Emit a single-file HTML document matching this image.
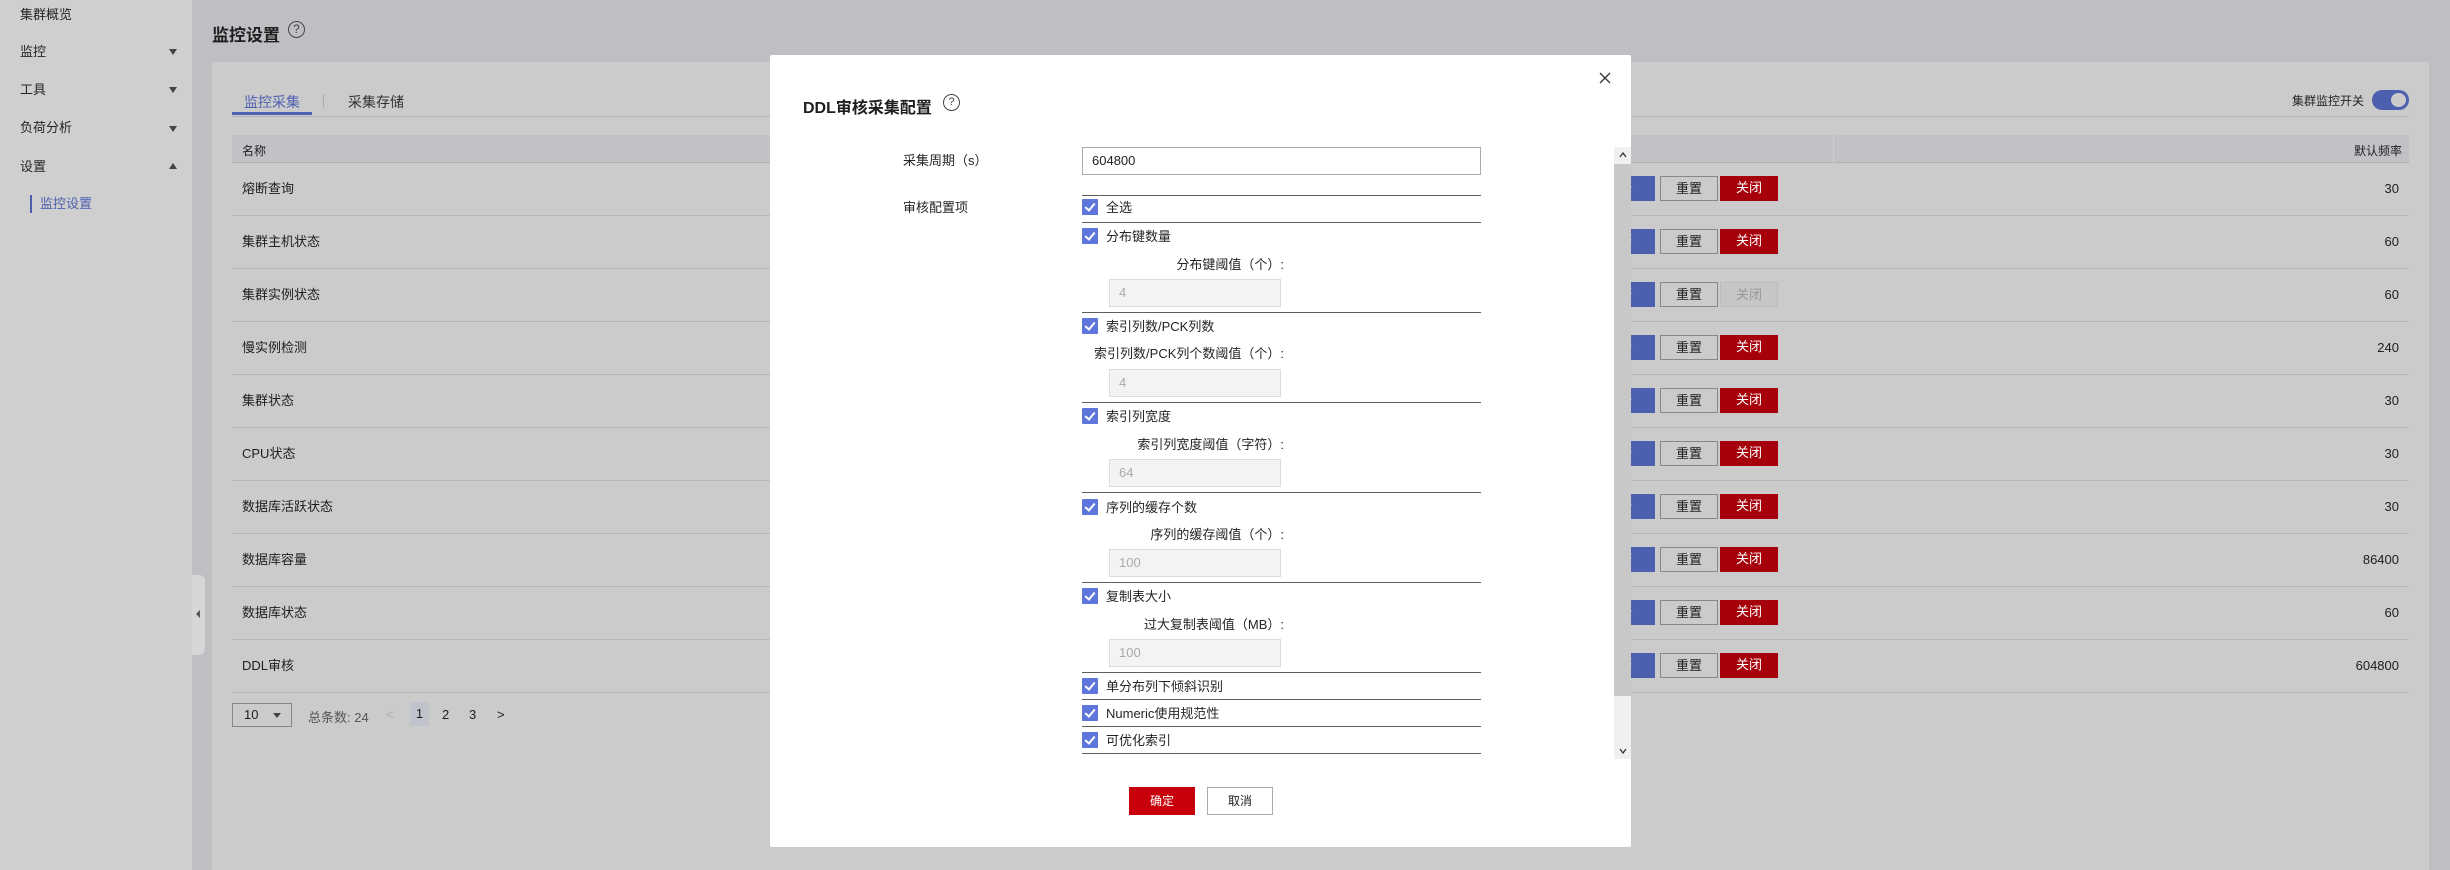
<!DOCTYPE html>
<html><head><meta charset="utf-8">
<style>
*{box-sizing:border-box;margin:0;padding:0}
body{width:2450px;height:870px;overflow:hidden;background:#bebfc3;font-family:"Liberation Sans","Noto Sans CJK SC",sans-serif;font-size:13px;color:#1e1e1e;position:relative}
.abs{position:absolute}
.side{left:0;top:0;width:192px;height:870px;background:#cfcfcf}
.si{position:absolute;left:20px;font-size:13px;color:#252525;line-height:16px}
.arr{position:absolute;left:169px;width:0;height:0;border-left:4px solid transparent;border-right:4px solid transparent}
.card{left:212px;top:62px;width:2217px;height:808px;background:#cbcbcb}
.row{position:absolute;left:232px;width:2177px;height:53px;border-bottom:1px solid #b5b6ba}
.row .n{position:absolute;left:10px;top:18px;line-height:16px}
.row .f{position:absolute;right:10px;top:18px;line-height:16px}
.b{position:absolute;top:13px;height:25px;font-size:13px;line-height:23px;text-align:center}
.modal{left:770px;top:55px;width:861px;height:792px;background:#fff;border-radius:2px}
.ln{position:absolute;left:312px;width:399px;height:1px;background:#5e5e5e}
.cb{position:absolute;left:312px;width:16px;height:16px;background:#5e76dc;border-radius:1px}
.cb:after{content:"";position:absolute;left:5px;top:2px;width:4px;height:8px;border-right:2px solid #fff;border-bottom:2px solid #fff;transform:rotate(40deg)}
.ct{position:absolute;left:336px;line-height:16px;font-size:13px;color:#252525}
.sl{position:absolute;right:347px;line-height:16px;font-size:13px;color:#252525;text-align:right}
.di{position:absolute;left:339px;width:172px;height:28px;background:#f3f3f3;border:1px solid #dcdcdc;color:#aaa;padding-left:9px;line-height:26px;font-size:13px}
.bl{position:absolute;left:1626px;width:29px;height:25px;background:#4d60b0;color:#9aa5d8;font-size:13px;line-height:25px;overflow:hidden;text-indent:-6px}
</style></head><body>
<div class="abs side">
  <div class="si" style="top:7px">集群概览</div>
  <div class="si" style="top:44px">监控</div><div class="arr" style="top:49px;border-top:6px solid #444"></div>
  <div class="si" style="top:82px">工具</div><div class="arr" style="top:87px;border-top:6px solid #444"></div>
  <div class="si" style="top:120px">负荷分析</div><div class="arr" style="top:126px;border-top:6px solid #444"></div>
  <div class="si" style="top:159px">设置</div><div class="arr" style="top:163px;border-bottom:6px solid #444"></div>
  <div class="abs" style="left:30px;top:195px;width:2px;height:18px;background:#4d60b0"></div>
  <div class="si" style="left:40px;top:196px;color:#4d60b0">监控设置</div>
</div>
<div class="abs" style="left:192px;top:575px;width:13px;height:80px;background:#d6d6d6;border-radius:0 6px 6px 0"></div>
<div class="abs" style="left:196px;top:610px;width:0;height:0;border-top:4px solid transparent;border-bottom:4px solid transparent;border-right:4px solid #555"></div>
<div class="abs" style="left:212px;top:21px;font-size:17px;font-weight:bold;color:#1e1e1e">监控设置</div>
<div class="abs" style="left:288px;top:21px;width:17px;height:17px;border:1.5px solid #444;border-radius:50%;font-size:12px;text-align:center;line-height:15px;color:#444">?</div>
<div class="abs card"></div>
<div class="abs" style="left:244px;top:92px;font-size:14px;color:#4d60b0">监控采集</div>
<div class="abs" style="left:232px;top:112px;width:80px;height:3px;background:#4d60b0"></div>
<div class="abs" style="left:323px;top:94px;width:1px;height:14px;background:#aaa"></div>
<div class="abs" style="left:348px;top:92px;font-size:14px;color:#333">采集存储</div>
<div class="abs" style="left:232px;top:116px;width:2177px;height:1px;background:#b2b3b7"></div>
<div class="abs" style="left:2292px;top:92px;font-size:12px;color:#252525">集群监控开关</div>
<div class="abs" style="left:2372px;top:90px;width:37px;height:20px;border-radius:10px;background:#4d60b0"></div>
<div class="abs" style="left:2391px;top:93px;width:15px;height:14px;border-radius:50%;background:#cbcbcb"></div>
<div class="abs" style="left:232px;top:135px;width:2177px;height:28px;background:#c1c2c6;border-bottom:1px solid #b1b2b6"></div>
<div class="abs" style="left:1833px;top:135px;width:1px;height:28px;background:#cfcfd2"></div>
<div class="abs" style="left:242px;top:142px;font-size:12px">名称</div>
<div class="abs" style="right:48px;top:142px;font-size:12px">默认频率</div>

<div class="row" style="top:163px"><span class="n">熔断查询</span><span class="f">30</span><div class="b" style="left:1428px;width:58px;border:1px solid #888;">重置</div><div class="b" style="left:1488px;width:58px;background:#a6000b;color:#fff">关闭</div></div>
<div class="row" style="top:216px"><span class="n">集群主机状态</span><span class="f">60</span><div class="b" style="left:1428px;width:58px;border:1px solid #888;">重置</div><div class="b" style="left:1488px;width:58px;background:#a6000b;color:#fff">关闭</div></div>
<div class="row" style="top:269px"><span class="n">集群实例状态</span><span class="f">60</span><div class="b" style="left:1428px;width:58px;border:1px solid #888;">重置</div><div class="b" style="left:1488px;width:58px;background:#c6c6c6;border:1px solid #bbb;color:#999">关闭</div></div>
<div class="row" style="top:322px"><span class="n">慢实例检测</span><span class="f">240</span><div class="b" style="left:1428px;width:58px;border:1px solid #888;">重置</div><div class="b" style="left:1488px;width:58px;background:#a6000b;color:#fff">关闭</div></div>
<div class="row" style="top:375px"><span class="n">集群状态</span><span class="f">30</span><div class="b" style="left:1428px;width:58px;border:1px solid #888;">重置</div><div class="b" style="left:1488px;width:58px;background:#a6000b;color:#fff">关闭</div></div>
<div class="row" style="top:428px"><span class="n">CPU状态</span><span class="f">30</span><div class="b" style="left:1428px;width:58px;border:1px solid #888;">重置</div><div class="b" style="left:1488px;width:58px;background:#a6000b;color:#fff">关闭</div></div>
<div class="row" style="top:481px"><span class="n">数据库活跃状态</span><span class="f">30</span><div class="b" style="left:1428px;width:58px;border:1px solid #888;">重置</div><div class="b" style="left:1488px;width:58px;background:#a6000b;color:#fff">关闭</div></div>
<div class="row" style="top:534px"><span class="n">数据库容量</span><span class="f">86400</span><div class="b" style="left:1428px;width:58px;border:1px solid #888;">重置</div><div class="b" style="left:1488px;width:58px;background:#a6000b;color:#fff">关闭</div></div>
<div class="row" style="top:587px"><span class="n">数据库状态</span><span class="f">60</span><div class="b" style="left:1428px;width:58px;border:1px solid #888;">重置</div><div class="b" style="left:1488px;width:58px;background:#a6000b;color:#fff">关闭</div></div>
<div class="row" style="top:640px"><span class="n">DDL审核</span><span class="f">604800</span><div class="b" style="left:1428px;width:58px;border:1px solid #888;">重置</div><div class="b" style="left:1488px;width:58px;background:#a6000b;color:#fff">关闭</div></div>
<div class="bl" style="top:176px">析</div>
<div class="bl" style="top:229px">析</div>
<div class="bl" style="top:282px">析</div>
<div class="bl" style="top:335px">析</div>
<div class="bl" style="top:388px">析</div>
<div class="bl" style="top:441px">析</div>
<div class="bl" style="top:494px">析</div>
<div class="bl" style="top:547px">析</div>
<div class="bl" style="top:600px">析</div>
<div class="bl" style="top:653px">析</div>

<div class="abs" style="left:232px;top:703px;width:60px;height:24px;border:1px solid #888;padding-left:11px;line-height:22px">10</div>
<div class="abs" style="left:273px;top:713px;width:0;height:0;border-left:4px solid transparent;border-right:4px solid transparent;border-top:5px solid #444"></div>
<div class="abs" style="left:308px;top:707px;color:#555">总条数: 24</div>
<div class="abs" style="left:386px;top:707px;color:#aaa">&lt;</div>
<div class="abs" style="left:410px;top:702px;width:19px;height:24px;background:#c0c3cc;text-align:center;line-height:24px">1</div>
<div class="abs" style="left:442px;top:707px">2</div>
<div class="abs" style="left:469px;top:707px">3</div>
<div class="abs" style="left:497px;top:707px">&gt;</div>

<div class="abs modal">
  <svg class="abs" style="left:829px;top:17px" width="12" height="12" viewBox="0 0 12 12"><path d="M1 1L11 11M11 1L1 11" stroke="#333" stroke-width="1.3" fill="none"/></svg>
  <div class="abs" style="left:33px;top:39px;font-size:16px;font-weight:bold;color:#1e1e1e">DDL审核采集配置</div>
  <div class="abs" style="left:173px;top:39px;width:17px;height:17px;border:1.3px solid #444;border-radius:50%;font-size:11px;text-align:center;line-height:15px;color:#444">?</div>
  <div class="abs" style="left:133px;top:95px;color:#252525">采集周期（s）</div>
  <div class="abs" style="left:312px;top:92px;width:399px;height:28px;border:1px solid #aaa;padding-left:9px;line-height:26px">604800</div>
  <div class="abs" style="left:133px;top:142px;color:#252525">审核配置项</div>
  <div class="ln" style="top:140px"></div>
  <div class="cb" style="top:144px"></div><div class="ct" style="top:145px">全选</div>
  <div class="ln" style="top:167px"></div>
  <div class="cb" style="top:173px"></div><div class="ct" style="top:174px">分布键数量</div>
  <div class="sl" style="top:202px">分布键阈值（个）:</div>
  <div class="di" style="top:224px">4</div>
  <div class="ln" style="top:257px"></div>
  <div class="cb" style="top:263px"></div><div class="ct" style="top:264px">索引列数/PCK列数</div>
  <div class="sl" style="top:291px">索引列数/PCK列个数阈值（个）:</div>
  <div class="di" style="top:314px">4</div>
  <div class="ln" style="top:347px"></div>
  <div class="cb" style="top:353px"></div><div class="ct" style="top:354px">索引列宽度</div>
  <div class="sl" style="top:382px">索引列宽度阈值（字符）:</div>
  <div class="di" style="top:404px">64</div>
  <div class="ln" style="top:437px"></div>
  <div class="cb" style="top:444px"></div><div class="ct" style="top:445px">序列的缓存个数</div>
  <div class="sl" style="top:472px">序列的缓存阈值（个）:</div>
  <div class="di" style="top:494px">100</div>
  <div class="ln" style="top:527px"></div>
  <div class="cb" style="top:533px"></div><div class="ct" style="top:534px">复制表大小</div>
  <div class="sl" style="top:562px">过大复制表阈值（MB）:</div>
  <div class="di" style="top:584px">100</div>
  <div class="ln" style="top:617px"></div>
  <div class="cb" style="top:623px"></div><div class="ct" style="top:624px">单分布列下倾斜识别</div>
  <div class="ln" style="top:644px"></div>
  <div class="cb" style="top:650px"></div><div class="ct" style="top:651px">Numeric使用规范性</div>
  <div class="ln" style="top:671px"></div>
  <div class="cb" style="top:677px"></div><div class="ct" style="top:678px">可优化索引</div>
  <div class="ln" style="top:698px"></div>
  <div class="abs" style="left:844px;top:92px;width:17px;height:612px;background:#c8c8c8"></div>
  <div class="abs" style="left:844px;top:92px;width:17px;height:17px;background:#f0f0f0"></div>
  <svg class="abs" style="left:849px;top:97px" width="8" height="6"><path d="M1 5L4 1L7 5" stroke="#333" stroke-width="1.3" fill="none"/></svg>
  <div class="abs" style="left:844px;top:641px;width:17px;height:63px;background:#f0f0f0"></div>
  <svg class="abs" style="left:849px;top:693px" width="8" height="6"><path d="M1 1L4 5L7 1" stroke="#333" stroke-width="1.3" fill="none"/></svg>
  <div class="abs" style="left:359px;top:732px;width:66px;height:28px;background:#c7000b;color:#fff;text-align:center;line-height:28px;font-size:12px">确定</div>
  <div class="abs" style="left:437px;top:732px;width:66px;height:28px;border:1px solid #aaa;text-align:center;line-height:26px;font-size:12px">取消</div>
</div>
</body></html>
